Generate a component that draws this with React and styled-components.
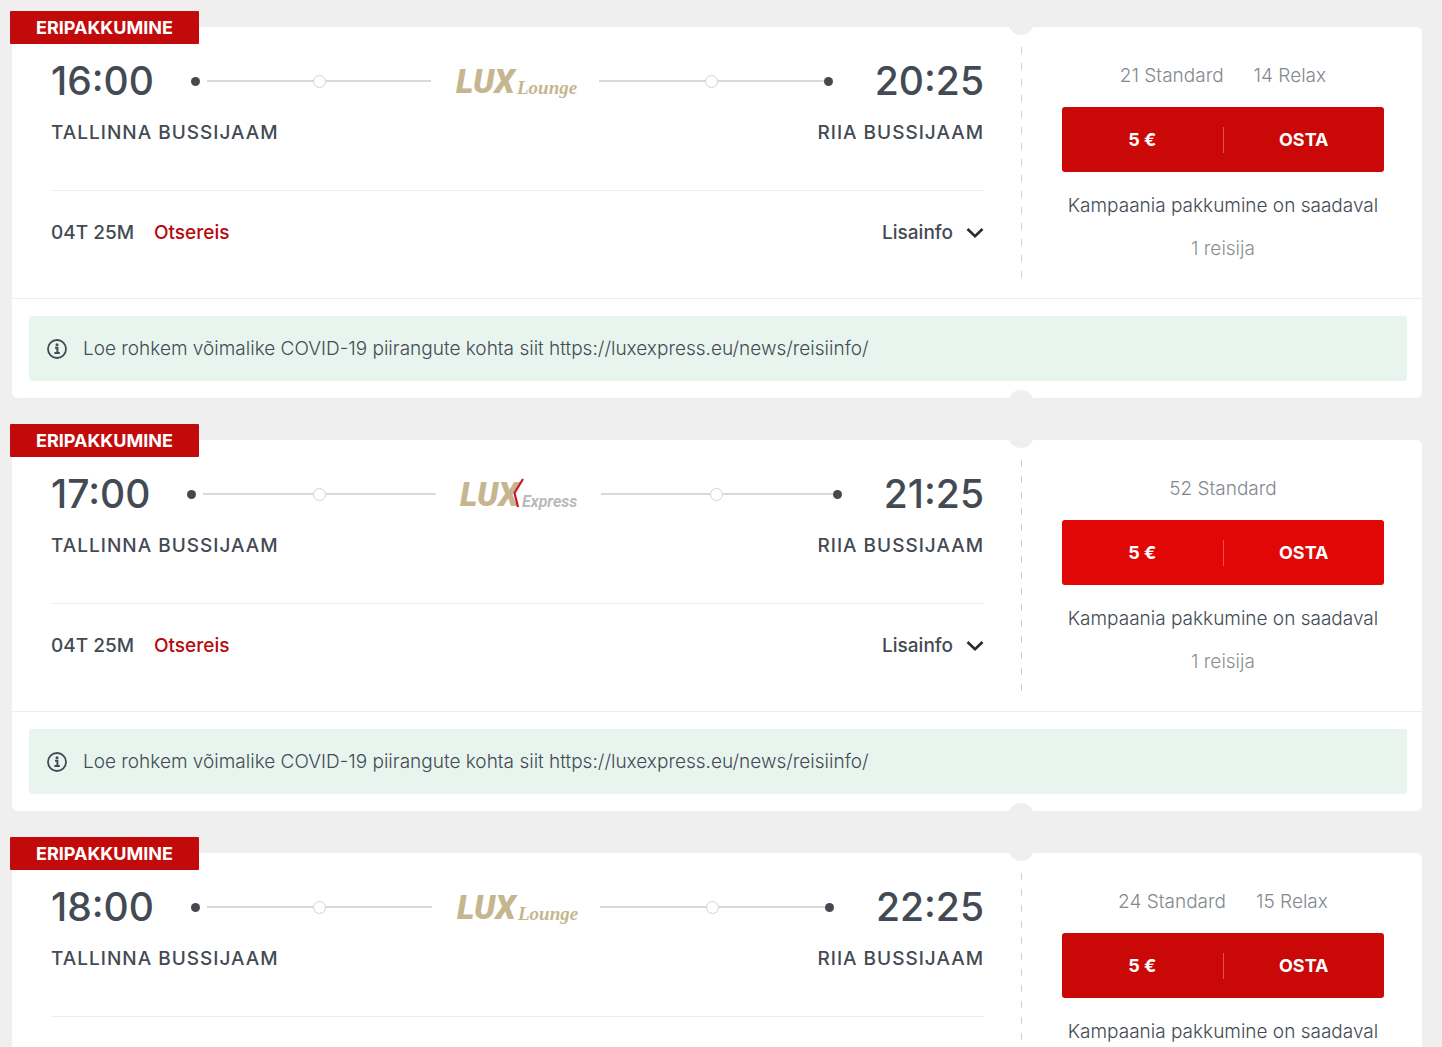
import React, { useState } from 'react';
import styled, { createGlobalStyle } from 'styled-components';

const GlobalStyle = createGlobalStyle`
  * { box-sizing: border-box; }
  body {
    margin: 0;
    background: #efefef;
    color: #434a54;
    font-family: Inter, "Liberation Sans", sans-serif;
    font-size: 19px;
    line-height: 24px;
  }
`;

// --- Data ---
const notice = 'Loe rohkem võimalike COVID-19 piirangute kohta siit https://luxexpress.eu/news/reisiinfo/';

const trips = [
  { id: 1, from: '16:00', to: '20:25', brand: 'lounge', seats: ['21 Standard', '14 Relax'] },
  { id: 2, from: '17:00', to: '21:25', brand: 'express', seats: ['52 Standard'], active: true },
  { id: 3, from: '18:00', to: '22:25', brand: 'lounge', seats: ['24 Standard', '15 Relax'] },
];

// --- Styled Components ---
const Page = styled.main`
  display: flex;
  flex-direction: column;
  gap: 42px;
  padding: 27px 20px 42px 12px;
`;

const Card = styled.article`
  position: relative;
  background: #fff;
  border-radius: 6px;
`;

const Badge = styled.div`
  position: absolute;
  top: -16px;
  left: -2px;
  padding: 0 26px;
  background: #c30a0a;
  border-radius: 1px;
  color: #fff;
  font-size: 18px;
  font-weight: 700;
  line-height: 33px;
`;

const Notch = styled.span`
  position: absolute;
  right: 388px;
  ${(props) => (props.$bottom ? 'bottom: 0;' : 'top: 0;')}
  width: 26px;
  height: 8px;
  overflow: hidden;

  &::before {
    content: '';
    position: absolute;
    left: 0;
    ${(props) => (props.$bottom ? 'top: 0;' : 'bottom: 0;')}
    width: 26px;
    height: 26px;
    border-radius: 50%;
    background: #efefef;
  }
`;

const CardBody = styled.div`
  display: flex;
`;

const Journey = styled.section`
  flex: 1;
  min-width: 0;
  padding: 30px 37px 53px 39px;
`;

const Perforation = styled.div`
  width: 1px;
  margin: 20px 0;
  background: repeating-linear-gradient(#d2d2d2 0 7px, transparent 7px 16px);
`;

const Booking = styled.section`
  width: 400px;
  padding: 37px 38px 0 40px;
  text-align: center;
`;

const Timeline = styled.div`
  display: flex;
  align-items: center;
`;

const Time = styled.time`
  font-size: 39px;
  font-weight: 450;
  line-height: 48px;
`;

const Dot = styled.span`
  width: 9px;
  height: 9px;
  margin: ${(props) => (props.$end ? '0 42px 0 0' : '0 7px 0 37px')};
  border-radius: 50%;
  background: #45494f;
`;

const Track = styled.span`
  flex: 1;
  display: flex;
  align-items: center;
  justify-content: center;
  height: 12px;
  background: linear-gradient(#d9d9d9, #d9d9d9) center / 100% 2px no-repeat;

  &::before {
    content: '';
    width: 11px;
    height: 11px;
    border: 1px solid #d4d4d4;
    border-radius: 50%;
    background: #fff;
  }
`;

const Logo = styled.svg`
  flex: none;
  margin: 0 24px;
  overflow: visible;
`;

const Stations = styled.div`
  display: flex;
  justify-content: space-between;
  margin-top: 16px;
  padding-bottom: 45px;
  border-bottom: 1px solid #ededed;
  font-weight: 500;
  letter-spacing: 1px;
  text-transform: uppercase;
`;

const Details = styled.div`
  display: flex;
  align-items: center;
  gap: 20px;
  margin-top: 30px;
  font-weight: 500;
`;

const Direct = styled.span`
  color: #b8090f;
`;

const InfoButton = styled.button`
  display: flex;
  align-items: center;
  gap: 13px;
  margin-left: auto;
  padding: 0;
  border: 0;
  background: none;
  color: inherit;
  font: inherit;
  cursor: pointer;
`;

const Seats = styled.div`
  display: flex;
  justify-content: center;
  gap: 30px;
  margin-bottom: 19px;
  color: #83888e;
  font-weight: 300;
`;

const BuyButton = styled.button`
  display: flex;
  align-items: center;
  width: 100%;
  height: 65px;
  padding: 0;
  border: 0;
  border-radius: 3px;
  background: ${(props) => (props.$active ? '#e10707' : '#cb0808')};
  color: #fff;
  font: inherit;
  font-size: 18px;
  font-weight: 700;
  cursor: pointer;

  &:hover { background: #e10707; }

  span { flex: 1; }
  span + span {
    border-left: 1px solid rgba(255, 255, 255, 0.3);
    line-height: 26px;
  }
`;

const Offer = styled.p`
  margin: 22px 0 19px;
  font-weight: 300;
  white-space: nowrap;
`;

const Passengers = styled.p`
  margin: 0;
  color: #8b8f94;
  font-weight: 300;
`;

const CardFooter = styled.footer`
  padding: 17px 15px 17px 17px;
  border-top: 1px solid #ededed;
`;

const Notice = styled.p`
  display: flex;
  align-items: center;
  gap: 16px;
  min-height: 65px;
  margin: 0;
  padding: 0 18px;
  border-radius: 3px;
  background: #e8f5ef;
  font-weight: 300;
`;

// --- Icons and logos ---
const InfoIcon = () => (
  <svg width="20" height="20" viewBox="0 0 20 20" fill="none" stroke="#434a54" aria-hidden="true">
    <circle cx="10" cy="10" r="9" strokeWidth="1.8" />
    <circle cx="10" cy="5.8" r="1.5" fill="#434a54" stroke="none" />
    <path d="M8 8.8h2.4v5M7.4 14h5.4" strokeWidth="2" />
  </svg>
);

const Chevron = () => (
  <svg width="18" height="12" viewBox="0 0 18 12" fill="none" stroke="#272b30" strokeWidth="2.6" aria-hidden="true">
    <path d="M1.5 2L9 9.2L16.5 2" />
  </svg>
);

const LoungeLogo = () => (
  <Logo width="120" height="40" viewBox="0 0 120 40" role="img" aria-label="Lux Lounge">
    <g fill="#c5b68f" fontStyle="italic">
      <text x="1" y="32" fontSize="33" fontWeight="900" fontFamily="Roboto, sans-serif">LUX</text>
      <text x="62" y="33" fontSize="19" fontWeight="700" fontFamily='"Liberation Serif", serif'>Lounge</text>
    </g>
  </Logo>
);

const ExpressLogo = () => (
  <Logo width="117" height="40" viewBox="0 0 117 40" role="img" aria-label="Lux Express">
    <g fontStyle="italic" fontFamily="Roboto, sans-serif">
      <text x="0" y="32" fontSize="33" fontWeight="900" fill="#c5b68f">LUX</text>
      <path d="M65 4L55 18L58 33H63L61 20Z" fill="#fff" />
      <path d="M63 5L54.5 19L58 33" fill="none" stroke="#cf1720" strokeWidth="2.2" />
      <text x="62" y="33" fontSize="16" fontWeight="700" fill="#b9babd">Express</text>
    </g>
  </Logo>
);

// --- Trip card ---
const TripCard = ({ trip }) => {
  const [open, setOpen] = useState(false);

  return (
    <Card>
      <Badge>ERIPAKKUMINE</Badge>
      <Notch />
      <CardBody>
        <Journey>
          <Timeline>
            <Time>{trip.from}</Time>
            <Dot />
            <Track />
            {trip.brand === 'lounge' ? <LoungeLogo /> : <ExpressLogo />}
            <Track />
            <Dot $end />
            <Time>{trip.to}</Time>
          </Timeline>
          <Stations>
            <span>Tallinna bussijaam</span>
            <span>Riia bussijaam</span>
          </Stations>
          <Details>
            <span>04T 25M</span>
            <Direct>Otsereis</Direct>
            <InfoButton type="button" aria-expanded={open} onClick={() => setOpen(!open)}>
              Lisainfo
              <Chevron />
            </InfoButton>
          </Details>
        </Journey>
        <Perforation />
        <Booking>
          <Seats>
            {trip.seats.map((seat) => <span key={seat}>{seat}</span>)}
          </Seats>
          <BuyButton type="button" $active={trip.active}>
            <span>5 €</span>
            <span>OSTA</span>
          </BuyButton>
          <Offer>Kampaania pakkumine on saadaval</Offer>
          <Passengers>1 reisija</Passengers>
        </Booking>
      </CardBody>
      <CardFooter>
        <Notice>
          <InfoIcon />
          {notice}
        </Notice>
      </CardFooter>
      <Notch $bottom />
    </Card>
  );
};

// --- Main Component ---
const App = () => (
  <Page>
    <GlobalStyle />
    {trips.map((trip) => <TripCard key={trip.id} trip={trip} />)}
  </Page>
);

export default App;
